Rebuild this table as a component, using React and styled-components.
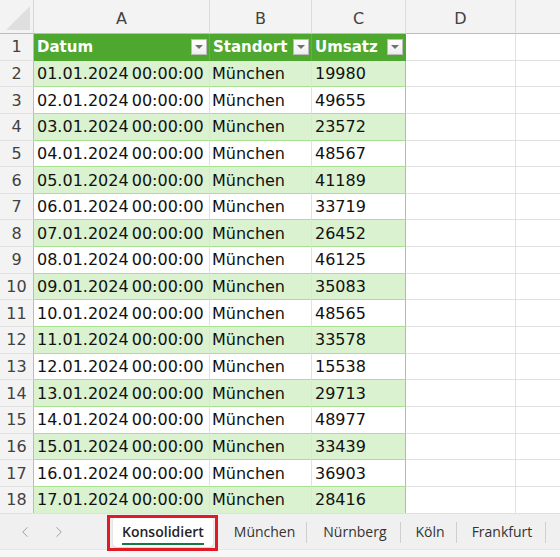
import React from 'react';
import styled, { createGlobalStyle } from 'styled-components';
import { ChevronLeft, ChevronRight } from 'lucide-react';

const GlobalStyle = createGlobalStyle`
  html, body {
    margin: 0;
    padding: 0;
    background: #ffffff;
  }
  body {
    font-family: "DejaVu Sans", "Liberation Sans", sans-serif;
  }
`;

const COLS = [
  { key: 'A', width: 176 },
  { key: 'B', width: 102 },
  { key: 'C', width: 94 },
  { key: 'D', width: 110 },
  { key: 'E', width: 110 },
];

const ROW_H = 26.65;

const values = [
  19980, 49655, 23572, 48567, 41189, 33719, 26452, 46125, 35083,
  48565, 33578, 15538, 29713, 48977, 33439, 36903, 28416,
];

const rows = values.map((v, i) => ({
  datum: `${String(i + 1).padStart(2, '0')}.01.2024 00:00:00`,
  standort: 'München',
  umsatz: v,
}));

const Window = styled.div`
  width: 560px;
  height: 557px;
  display: flex;
  flex-direction: column;
  overflow: hidden;
  background: #ffffff;
`;

const Sheet = styled.div`
  flex: 1;
  min-height: 0;
  overflow: hidden;
  display: grid;
  grid-template-columns: 34px ${COLS.map(c => `${c.width}px`).join(' ')};
  grid-template-rows: 34px;
  grid-auto-rows: ${ROW_H}px;
  align-content: start;
`;

const Corner = styled.div`
  background: #f3f3f3;
  border-right: 1px solid #d6d6d6;
  border-bottom: 1px solid #bdbdbd;
  position: relative;
  &::after {
    content: '';
    position: absolute;
    right: 3px;
    bottom: 3px;
    border-style: solid;
    border-width: 0 0 24px 24px;
    border-color: transparent transparent #dfdfdf transparent;
  }
`;

const ColHead = styled.div`
  background: #f3f3f3;
  border-right: 1px solid #dcdcdc;
  border-bottom: 1px solid #bdbdbd;
  color: #424242;
  font-size: 16px;
  display: flex;
  align-items: flex-end;
  justify-content: center;
  padding-bottom: 5px;
  box-sizing: border-box;
`;

const RowHead = styled.div`
  background: #f3f3f3;
  border-right: 1px solid #bdbdbd;
  border-bottom: 1px solid #e1e1e1;
  color: #424242;
  font-size: 16px;
  display: flex;
  align-items: center;
  justify-content: center;
  box-sizing: border-box;
`;

const Cell = styled.div`
  box-sizing: border-box;
  border-bottom: 1px solid ${p => (p.$table ? '#a8e092' : '#e1e1e1')};
  border-right: 1px solid ${p => (p.$edge ? '#8ed973' : '#e1e1e1')};
  background: ${p => p.$bg || '#ffffff'};
  font-size: 16px;
  word-spacing: -2px;
  color: #111111;
  display: flex;
  align-items: center;
  padding-left: ${p => p.$pad ?? 3}px;
  white-space: nowrap;
  overflow: hidden;
`;

const HeadCell = styled.div`
  box-sizing: border-box;
  background: #4ea72e;
  border-right: 1px solid ${p => (p.$edge ? '#4ea72e' : '#5fb340')};
  color: #ffffff;
  font-weight: bold;
  font-size: 15px;
  display: flex;
  align-items: center;
  justify-content: space-between;
  padding: 0 2px 0 3px;
`;

const FilterButton = styled.span`
  width: 16px;
  height: 16px;
  box-sizing: border-box;
  border: 1px solid #bcbcbc;
  background: linear-gradient(#ffffff, #eeeeee);
  display: flex;
  align-items: center;
  justify-content: center;
  &::after {
    content: '';
    border-style: solid;
    border-width: 4px 4px 0 4px;
    border-color: #707070 transparent transparent transparent;
  }
`;

const TabBar = styled.div`
  flex-shrink: 0;
  height: 35px;
  background: #f0f0f0;
  border-top: 1px solid #e0e0e0;
  display: flex;
  align-items: center;
  padding-left: 8px;
  font-family: "Open Sans", "Liberation Sans", sans-serif;
  font-size: 14px;
  color: #333333;
`;

const StatusStrip = styled.div`
  flex-shrink: 0;
  height: 7px;
  background: #f7f7f7;
  border-top: 1px solid #e6e6e6;
`;

const NavArrow = styled.span`
  width: 34px;
  display: flex;
  justify-content: center;
  color: #9c9c9c;
`;

const Tabs = styled.div`
  display: flex;
  align-items: center;
  margin-left: 37px;
`;

const Tab = styled.div`
  position: relative;
  height: 30px;
  display: flex;
  align-items: center;
  padding: 0 ${p => p.$padR ?? 14}px 0 ${p => p.$padL ?? 14}px;
  box-sizing: border-box;
  ${p => p.$active && `
    background: #ffffff;
    border-radius: 4px;
    box-shadow: 0 1px 2px rgba(0,0,0,0.15);
    font-weight: 600;
    color: #242424;
    margin-right: 5px;
    &::before {
      content: '';
      position: absolute;
      left: -6px;
      right: -5px;
      top: -2px;
      bottom: -4px;
      border: 3px solid #e01b24;
    }
  `}
  ${p => p.$sep && `
    &::after {
      content: '';
      position: absolute;
      right: 0;
      top: 5px;
      height: 21px;
      border-right: 1px solid #cfcfcf;
    }
  `}
`;

const TabLabel = styled.span`
  position: relative;
  ${p => p.$active && `
    &::after {
      content: '';
      position: absolute;
      left: 0;
      right: 0;
      bottom: -4px;
      height: 2px;
      background: #107c41;
    }
  `}
`;

const sheets = [
  { name: 'Konsolidiert', padL: 9, padR: 9 },
  { name: 'München', padL: 16, padR: 12 },
  { name: 'Nürnberg', padL: 16, padR: 14 },
  { name: 'Köln', padL: 15, padR: 12 },
  { name: 'Frankfurt', padL: 15, padR: 14 },
];

export default function App() {
  return (
    <Window>
      <GlobalStyle />
      <Sheet>
        <Corner />
        {COLS.map(c => (
          <ColHead key={c.key}>{c.key}</ColHead>
        ))}

        <RowHead>1</RowHead>
        <HeadCell>Datum<FilterButton /></HeadCell>
        <HeadCell>Standort<FilterButton /></HeadCell>
        <HeadCell $edge>Umsatz<FilterButton /></HeadCell>
        <Cell />
        <Cell />

        {rows.map((r, i) => {
          const bg = i % 2 === 0 ? '#daf2d0' : '#ffffff';
          return (
            <React.Fragment key={i}>
              <RowHead>{i + 2}</RowHead>
              <Cell $table $bg={bg}>{r.datum}</Cell>
              <Cell $table $pad={2} $bg={bg}>{r.standort}</Cell>
              <Cell $table $edge $bg={bg}>{r.umsatz}</Cell>
              <Cell />
              <Cell />
            </React.Fragment>
          );
        })}
        <RowHead>19</RowHead>
        <Cell /><Cell /><Cell /><Cell /><Cell />
      </Sheet>
      <TabBar>
        <NavArrow><ChevronLeft size={18} strokeWidth={1.3} /></NavArrow>
        <NavArrow><ChevronRight size={18} strokeWidth={1.3} /></NavArrow>
        <Tabs>
          {sheets.map((s, i) => (
            <Tab key={s.name} $active={i === 0} $sep={i > 0} $padL={s.padL} $padR={s.padR}>
              <TabLabel $active={i === 0}>{s.name}</TabLabel>
            </Tab>
          ))}
        </Tabs>
      </TabBar>
      <StatusStrip />
    </Window>
  );
}
